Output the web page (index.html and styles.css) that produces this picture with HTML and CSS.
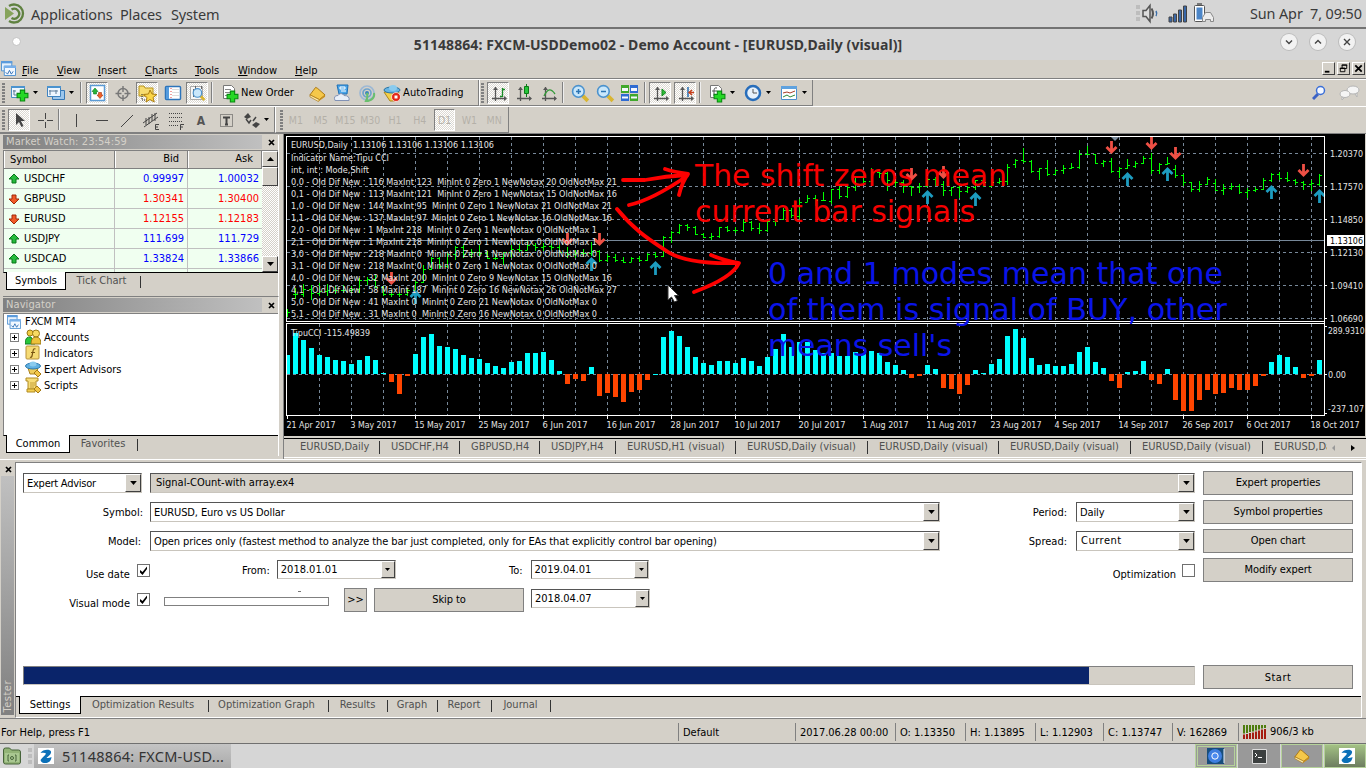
FILE: index.html
```html
<!DOCTYPE html>
<html lang="en">
<head>
<meta charset="utf-8">
<title>51148864: FXCM-USDDemo02</title>
<link rel="stylesheet" href="styles.css">
</head>
<body>
<svg class="defs" width="0" height="0">
  <defs>
    <symbol id="caret" viewBox="0 0 5 3"><path d="M0 0h5L2.5 3z"/></symbol>
    <symbol id="plus" viewBox="0 0 12 12"><path d="M4 1h4v3h3v4H8v3H4V8H1V4h3z" fill="#25d825" stroke="#0a8a12"/></symbol>
    <symbol id="win" viewBox="0 0 16 16"><path d="M.5 .5h11v10H.5z" fill="#e6f1fc" stroke="#4b8fd0"/><path d="M0 0h12v2.500H0z" fill="#5b9bdc"/><path d="M3.500 5.500h12v10h-12z" fill="#f2f8ff" stroke="#4b8fd0"/><path d="M3 5h13v2.500H3z" fill="#78b0ea"/><path d="M5 12l2 2 2-4 2 4 2-3" fill="none" stroke="#2f6fb5"/></symbol>
    <symbol id="gold" viewBox="0 0 18 16"><path d="M1 9L7 1l2 1 8 7-6 5z" fill="#f5c84a" stroke="#a87410"/><path d="M1 9v2l9 5 1-2z" fill="#fff0b0" stroke="#a87410" stroke-width=".7"/><path d="M11 14l-1 2 7-5V9z" fill="#c98e18"/></symbol>
    <symbol id="axes" viewBox="0 0 16 16"><path d="M3.500 1v14M0 12.500h14" stroke="#555" stroke-width="1.300"/><path d="M1 4l2.500-3L6 4zM12 10l3 2.500-3 2.500z" fill="#555"/></symbol>
    <symbol id="lens" viewBox="0 0 18 18"><path d="M11 11l5 5" stroke="#d9b531" stroke-width="3.500"/><circle cx="7" cy="7" r="5.500" fill="#c9e7fb" stroke="#4b92cd" stroke-width="1.500"/></symbol>
    <symbol id="up" viewBox="0 0 12 12"><path d="M6 1l5 5H8v4H4V6H1z" fill="#25bb3c" stroke="#087518"/></symbol>
    <symbol id="dn" viewBox="0 0 12 12"><path d="M6 11l5-5H8V2H4v4H1z" fill="#f05a28" stroke="#a02808"/></symbol>
    <symbol id="z" viewBox="0 0 16 16"><path d="M0 0h16v16H0z" fill="#fff"/><path d="M2.500 5C4 1.500 12 .5 13 3.500c.6 2.500-2.500 4.500-4.500 6.500 2 0 3.500-.3 5-1-.3 4.500-3.500 6-6 6S3 14.500 2.500 12C4 9.500 7.500 7.500 8 5.500 7 4.500 5 4.500 2.500 5z" fill="#0a70b8"/></symbol>
    <symbol id="tick" viewBox="0 0 9 9"><path d="M1 4v2.500L3.500 9 8 3V.5L3.500 6z"/></symbol>
    <symbol id="cross" viewBox="0 0 7 7"><path d="M1 1l5 5M6 1L1 6" stroke="#000" stroke-width="1.700" fill="none"/></symbol>
  </defs>
</svg>
<div class="screen">
  <header class="panel">
    <svg class="mate" width="22" height="22" viewBox="0 0 22 22"><path d="M1 4v13l9-6.500z" fill="#86a35b"/><g fill="none" stroke="#5f8140" stroke-width="2.300"><path d="M5 3a9 9 0 1 1 0 15"/><path d="M7.500 6.500a5 5 0 1 1 0 8.500"/></g></svg>
    <span class="apps">Applications</span><span class="places">Places</span><span class="system">System</span>
    <svg class="tray" width="80" height="22" viewBox="1136 3 80 22"><path d="M1136 5h4v4h-4zM1136 11h4v4h-4zM1136 17h4v4h-4z" fill="#bdbdbd"/><path d="M1143 10.500h3l4-5v16l-4-5h-3z" fill="#ddd" stroke="#555" stroke-width="1.500"/><path d="M1151.500 8.500q3 5 0 10" fill="none" stroke="#555" stroke-width="2"/><path d="M1156 11q1.500 2.500 0 5" fill="none" stroke="#3a6ea8" stroke-width="1.500"/><path d="M1169 17h3v5h-3zM1173.500 14h3v8h-3zM1178.500 10h3v12h-3zM1183.500 6h3v16h-3z" fill="#3867a8" stroke="#444"/><rect x="1194.500" y="5.500" width="10" height="16" rx="1" fill="#fff" stroke="#555"/><path d="M1196.500 7.500h6v12h-6z" fill="#4c86c8"/><path d="M1197 3h5v2h-5z" fill="#777"/><path d="M1202.500 21.500v-4l3-5h5l3 5v4h-3v-2h-5v2z" fill="#ececec" stroke="#888"/></svg>
    <span class="date">Sun Apr&nbsp; 7, 09:50</span>
  </header>
  <div class="titlebar"><i class="dot"></i><b>51148864: FXCM-USDDemo02 - Demo Account - [EURUSD,Daily (visual)]</b>
    <div class="winbtns"><i><svg viewBox="0 0 16 16"><path d="M5 6.500l3 3 3-3"/></svg></i><i><svg viewBox="0 0 16 16"><path d="M5 9.500l3-3 3 3"/></svg></i><i><svg viewBox="0 0 16 16"><path d="M5 5l6 6M11 5l-6 6"/></svg></i></div>
  </div>
  <nav class="menu"><svg width="15" height="15"><use href="#win"/></svg>
    <span style="width:35px"><u>F</u>ile</span><span style="width:41px"><u>V</u>iew</span><span style="width:47px"><u>I</u>nsert</span><span style="width:50px"><u>C</u>harts</span><span style="width:43px"><u>T</u>ools</span><span style="width:57px"><u>W</u>indow</span><span><u>H</u>elp</span>
    <div class="mdi"><i><svg viewBox="0 0 12 12"><path d="M2 9.500h5" stroke-width="2"/></svg></i><i><svg viewBox="0 0 12 12"><path d="M4.500 2h5v4h-5zM4 2.500h6M2.500 5.500h5v4h-5zM2 6h6"/></svg></i><i><svg viewBox="0 0 12 12"><path d="M2.500 2.500l7 7M9.500 2.500l-7 7" stroke-width="2"/></svg></i></div>
  </nav>

  <div class="bar bar1">
    <div class="group">
      <i class="grip"></i>
      <i class="b tight"><svg viewBox="0 0 22 22"><path d="M2.500 4.500h13v11h-13z" fill="#eef6ff" stroke="#4b8fc5"/><path d="M2 4h14v2H2z" fill="#4b93cf"/><path d="M5 8v5h7M4 9h3M10 12v3" stroke="#5e7d9a" fill="none"/><use href="#plus" x="7" y="7" width="13" height="13"/></svg></i><i class="c"><svg><use href="#caret"/></svg></i>
      <i class="b tight s6"><svg viewBox="0 0 22 22"><path d="M7.500 8.500h12v9h-12z" fill="#9cc6ec" stroke="#3778b5"/><path d="M2.500 4.500h13v10h-13z" fill="#eef6ff" stroke="#3f83c0"/><path d="M2 4h14v2H2z" fill="#4b93cf"/><path d="M5 8v5M4 9h9M11 8v4" stroke="#5e7d9a"/></svg></i><i class="c"><svg><use href="#caret"/></svg></i>
      <i class="sep lead"></i>
      <i class="b on"><svg viewBox="0 0 22 22"><path d="M4.500 3.500h14v15h-14z" fill="#fff" stroke="#5b9bd5" stroke-width="1.500"/><path d="M9 6l3 3.500h-1.500V12h-3V9.500H6z" fill="#27b53a" stroke="#0a7a1b" stroke-width=".6"/><path d="M14 16.500l3-3.500h-1.500v-2.500h-3V13H11z" fill="#f26026" stroke="#a03010" stroke-width=".6"/></svg></i>
      <i class="b"><svg viewBox="0 0 22 22"><g fill="none" stroke="#777" stroke-width="1.400"><circle cx="12" cy="11.500" r="5"/><path d="M12 4v6M12 13v6M4.500 11.500h6M13.500 11.500h6"/></g></svg></i>
      <i class="b on"><svg viewBox="0 0 22 22"><path d="M3 4h5l1 2h8v8H3z" fill="#f7dc70" stroke="#b8941d"/><path d="M6 12v6h4" stroke="#222" fill="none" stroke-dasharray="1 1"/><path d="M14 8l2 4 5 .5-4 3 1.200 4.500-4.200-2.500L10 20l1-4.500-3.500-3 5-.5z" fill="#fbd648" stroke="#ad7e10"/></svg></i>
      <i class="b"><svg viewBox="0 0 22 22"><rect x="4.500" y="4.500" width="15" height="13" rx="1" fill="#fff" stroke="#2d74ba" stroke-width="1.500"/><path d="M5 5h3v12H5z" fill="#549bdd"/><path d="M11 7.500h7M11 10.500h7M11 13.500h7" stroke="#ddd"/><path d="M10 6v11" stroke="#e24040" stroke-dasharray="1 2"/></svg></i>
      <i class="b on"><svg viewBox="0 0 22 22"><path d="M4.500 4.500h12v13h-12z" fill="#f7f7f7" stroke="#aaa"/><path d="M7.500 15V7M9.500 8V4M15.500 4v3" stroke="#666"/><use href="#lens" x="6" y="5" width="14" height="15"/></svg></i>
      <i class="sep tail"></i>
      <i class="b tight"><svg viewBox="0 0 22 22"><path d="M4.500 3.500h8l3 3v10h-11z" fill="#fff" stroke="#777"/><path d="M6 7.500h6M6 10.500h7M6 13.500h5" stroke="#888"/><use href="#plus" x="7" y="8" width="13" height="13"/></svg></i><span class="t1">New Order</span>
      <i class="b"><svg viewBox="0 0 22 22"><use href="#gold" x="3" y="4" width="17" height="16"/></svg></i>
      <i class="b"><svg viewBox="0 0 22 22"><path d="M6 3h11l-1 9H8z" fill="#4aa6ea" stroke="#1d6fb5"/><path d="M9 5h5v2H9zM10 9h5" stroke="#fff" fill="none"/><path d="M4 18.500q-2-5 3-5 3-4 6 0 6 0 5 5z" fill="#e9eff8" stroke="#8292b5"/></svg></i>
      <i class="b"><svg viewBox="0 0 22 22"><g fill="none" stroke-width="1.700"><circle cx="11" cy="11" r="7" stroke="#9db8d4"/><circle cx="11" cy="11" r="4" stroke="#6fa3cc"/></g><circle cx="11" cy="11" r="2" fill="#3a86bd"/><path d="M11 11c1 3 0 6-1 8 6 0 9-4 8-8" fill="none" stroke="#6abf6e" stroke-width="2"/></svg></i>
      <i class="b tight"><svg viewBox="0 0 22 22"><path d="M3 10h15l-4 9H9z" fill="#f4cf49" stroke="#ad8518"/><ellipse cx="11" cy="8" rx="8" ry="3" fill="#67b5e4" stroke="#2773a5"/><ellipse cx="12" cy="6" rx="4" ry="3" fill="#8acbee"/><circle cx="15" cy="15" r="4.500" fill="#e22818" stroke="#fff" stroke-width=".7"/><path d="M13.500 13.500h3v3h-3z" fill="#fff"/></svg></i><span class="t2">AutoTrading</span>
    </div>
    <div class="group g2">
      <i class="grip"></i>
      <i class="b on"><svg viewBox="0 0 22 22"><use href="#axes" x="5" y="4" width="16" height="16"/><path d="M15.500 6v9M13 14.500h2M16 7.500h2" stroke="#198a26" stroke-width="1.300"/></svg></i>
      <i class="b"><svg viewBox="0 0 22 22"><use href="#axes" x="5" y="4" width="16" height="16"/><path d="M14.500 2v13" stroke="#0d7a18"/><path d="M12.500 4.500h4v7h-4z" fill="#26c53a" stroke="#0d7a18"/></svg></i>
      <i class="b tight"><svg viewBox="0 0 22 22"><use href="#axes" x="5" y="4" width="16" height="16"/><path d="M7 14c3-6 6-9 11-2" stroke="#339a39" fill="none" stroke-width="1.300"/></svg></i>
      <i class="sep tail first"></i>
      <i class="b"><svg viewBox="0 0 22 22"><use href="#lens" x="2" y="2" width="19" height="19"/><path d="M7 9.500h5M9.500 7v5" stroke="#2b74b3" stroke-width="1.500"/></svg></i>
      <i class="b"><svg viewBox="0 0 22 22"><use href="#lens" x="2" y="2" width="19" height="19"/><path d="M7 9.500h5" stroke="#2b74b3" stroke-width="1.500"/></svg></i>
      <i class="b"><svg viewBox="0 0 22 22"><path d="M2 3h8v8H2zM11 12h8v7h-8z" fill="#40a82c"/><path d="M11 3h8v8h-8zM2 12h8v7H2z" fill="#2f6bd2"/><path d="M3 6h6v3H3zM12 6h6v3h-6zM3 14.500h6v2H3zM12 14.500h6v2h-6z" fill="#f6f8ff"/></svg></i>
      <i class="sep tail"></i>
      <i class="b on"><svg viewBox="0 0 22 22"><use href="#axes" x="5" y="4" width="16" height="16"/><path d="M13 7v7l4-3.500z" fill="#2cbd36" stroke="#14851c"/></svg></i>
      <i class="b on"><svg viewBox="0 0 22 22"><use href="#axes" x="5" y="4" width="16" height="16"/><path d="M14 5v10" stroke="#246cb0" stroke-width="1.500"/><path d="M15 10.500h5M18 8l-3 2.500 3 2.500" stroke="#c8401c" fill="none" stroke-width="1.400"/></svg></i>
      <i class="sep tail last"></i>
      <i class="b tight"><svg viewBox="0 0 22 22"><path d="M4.500 3.500h8l3 3v9h-11z" fill="#fff" stroke="#777"/><path d="M11 6q-3-1-3 3v5M6 9h5" stroke="#555" fill="none"/><use href="#plus" x="7" y="8" width="13" height="13"/></svg></i><i class="c"><svg><use href="#caret"/></svg></i>
      <i class="b tight s6"><svg viewBox="0 0 22 22"><circle cx="11" cy="11" r="7" fill="#e7f1fb" stroke="#276dbb" stroke-width="2.500"/><path d="M11 7v4h4" stroke="#555" fill="none"/></svg></i><i class="c"><svg><use href="#caret"/></svg></i>
      <i class="b tight s6"><svg viewBox="0 0 22 22"><path d="M3.500 4.500h15v13h-15z" fill="#fff" stroke="#4a8fcd"/><path d="M3 4h16v3H3z" fill="#5fa2df"/><path d="M5 11l4-1 3 1 5-2" stroke="#a93c28" fill="none"/><path d="M5 15l4-2 3 2 5-2" stroke="#2d8a39" fill="none"/></svg></i><i class="c"><svg><use href="#caret"/></svg></i>
    </div>
    <svg class="right-icons" width="50" height="18" viewBox="1312 84 50 18"><path d="M1318 94l-5 5" stroke="#3c62c4" stroke-width="3"/><circle cx="1320.500" cy="90.500" r="4" fill="#f3f7ff" stroke="#3b6fd6" stroke-width="1.500"/><g fill="#f5f5f5" stroke="#b5b5b5"><path d="M1355 94l2 3v-4z"/><ellipse cx="1353" cy="90" rx="6" ry="4"/><path d="M1342 97v3l3-3z"/><ellipse cx="1345" cy="94" rx="5" ry="3.500"/></g></svg>
  </div>

  <div class="bar bar2">
    <div class="group tools">
      <i class="grip"></i>
      <i class="b on"><svg viewBox="0 0 22 22"><path d="M8 4v12l3-3 2.500 5 2-1-2.500-5h4z" fill="#444"/></svg></i>
      <i class="b"><svg viewBox="0 0 22 22"><path d="M12.500 4v6M12.500 13v6M5 11.500h6M14 11.500h6" stroke="#444"/></svg></i>
      <i class="sep mid"></i>
      <i class="b"><svg viewBox="0 0 22 22"><path d="M11.500 5v13" stroke="#444"/></svg></i>
      <i class="b"><svg viewBox="0 0 22 22"><path d="M6 11.500h12" stroke="#444"/></svg></i>
      <i class="b"><svg viewBox="0 0 22 22"><path d="M6 18L18 6" stroke="#444"/></svg></i>
      <i class="b"><svg viewBox="0 0 22 22"><path d="M3 14L17 4M4 18L18 8M6 9v7M9 8v7M12 5v7M15 4v8" stroke="#444"/><path d="M19 15.500h-3.500v5H19M15 18h3" stroke="#444" fill="none"/></svg></i>
      <i class="b"><svg viewBox="0 0 22 22"><path d="M4 4.500h14M4 8.500h14M4 12.500h14M4 16.500h9" stroke="#444" stroke-dasharray="1 1"/><path d="M19 15.500h-3.500V21M15 18h3" stroke="#444" fill="none"/></svg></i>
      <i class="b glyph">A</i>
      <i class="b"><svg viewBox="0 0 22 22"><path d="M5.500 5.500h12v12h-12z" stroke="#444" fill="none" stroke-dasharray="1 1"/><path d="M8 8.500h7M11.500 8v8M10 15.500h3" stroke="#444" stroke-width="2"/></svg></i>
      <i class="b tight"><svg viewBox="0 0 22 22"><path d="M4 8l4-4 3 4-4 2zM12 16l4-3 4 2-4 4z" fill="#444"/><path d="M6 10l3 4 2-3M13 12l3-4" stroke="#444" stroke-width="1.500" fill="none"/></svg></i><i class="c"><svg><use href="#caret"/></svg></i>
    </div>
    <div class="group periods"><i class="grip"></i><span>M1</span><span>M5</span><span>M15</span><span>M30</span><span>H1</span><span>H4</span><span class="on">D1</span><span>W1</span><span>MN</span></div>
  </div>

  <main>
    <aside>
      <section class="dock watch">
        <h2><span>Market Watch: 23:54:59</span><i class="x"><svg><use href="#cross"/></svg></i></h2>
        <div class="quotes">
          <div class="rows">
            <div class="r head"><span>Symbol</span><span>Bid</span><span>Ask</span></div>
            <div class="r buy"><span><svg><use href="#up"/></svg>USDCHF</span><span>0.99997</span><span>1.00032</span></div>
            <div class="r sell"><span><svg><use href="#dn"/></svg>GBPUSD</span><span>1.30341</span><span>1.30400</span></div>
            <div class="r sell"><span><svg><use href="#dn"/></svg>EURUSD</span><span>1.12155</span><span>1.12183</span></div>
            <div class="r buy"><span><svg><use href="#up"/></svg>USDJPY</span><span>111.699</span><span>111.729</span></div>
            <div class="r buy"><span><svg><use href="#up"/></svg>USDCAD</span><span>1.33824</span><span>1.33866</span></div>
            <div class="r buy last"><span></span><span></span><span></span></div>
          </div>
          <div class="scroll"><i class="sb"><svg viewBox="0 0 7 4"><path d="M0 4h7L3.500 0z"/></svg></i><i class="thumb"></i><i class="sb end"><svg viewBox="0 0 7 4"><path d="M0 0h7L3.500 4z"/></svg></i></div>
        </div>
        <div class="tabs"><span class="sel" style="width:60px">Symbols</span><span class="off" style="width:74px">Tick Chart</span></div>
      </section>
      <section class="dock nav">
        <h2><span>Navigator</span><i class="x"><svg><use href="#cross"/></svg></i></h2>
        <div class="tree">
          <div><svg class="root" width="14" height="14"><use href="#win"/></svg>FXCM MT4</div>
          <div class="n"><i></i><svg viewBox="0 0 16 16"><circle cx="5" cy="4" r="3" fill="#f1cc42" stroke="#9a7914"/><path d="M0 15q0-8 6-7l4 7z" fill="#28c63c" stroke="#117c1f"/><circle cx="11" cy="4.500" r="3.500" fill="#f7da63" stroke="#9a7914"/><path d="M6 15q0-7 5-7t5 7z" fill="#edc23b" stroke="#9a7914"/></svg>Accounts</div>
          <div class="n"><i></i><svg viewBox="0 0 16 16"><rect x="1" y="1" width="13" height="13" rx="1" fill="#f6db75" stroke="#b8923a"/><path d="M10.500 4q-2-1-2.500 2l-1 5q-.5 2-2 1M6 7.500h4" stroke="#785412" fill="none" stroke-width="1.200"/></svg>Indicators</div>
          <div class="n"><i></i><svg viewBox="0 0 16 16"><path d="M3 7h10l-2 6H5z" fill="#f0cd5a" stroke="#a98220"/><ellipse cx="8" cy="5" rx="7.500" ry="3" fill="#5fb0e2" stroke="#2b78ad"/><ellipse cx="8" cy="3" rx="3.500" ry="2.500" fill="#8acbee"/><path d="M9 12l3-3 4 4-3 3z" fill="#f2c646" stroke="#a67a15"/></svg>Expert Advisors</div>
          <div class="n lastn"><i></i><svg viewBox="0 0 16 16"><path d="M1 1h12v3h-2v8H3V4H1z" fill="#f7dc76" stroke="#b08b23"/><path d="M5 6h5M5 8h5M5 10h4" stroke="#a67a15" stroke-width=".6"/><path d="M2 12h8v3H2z" fill="#f5d052" stroke="#b08b23"/><path d="M9 12l3-3 4 4-3 3z" fill="#f2c646" stroke="#a67a15"/></svg>Scripts</div>
        </div>
        <div class="tabs"><span class="sel" style="width:64px">Common</span><span class="off" style="width:67px">Favorites</span></div>
      </section>
    </aside>
    <section class="chartarea">
      <svg id="chart" class="chart" width="1081" height="302" viewBox="284 134 1081 302"></svg>
      <div class="charttabs"><span style="width:88px">EURUSD,Daily</span><span style="width:80px">USDCHF,H4</span><span style="width:80px">GBPUSD,H4</span><span style="width:76px">USDJPY,H4</span><span style="width:120px">EURUSD,H1 (visual)</span><span style="width:132px">EURUSD,Daily (visual)</span><span style="width:131px">EURUSD,Daily (visual)</span><span style="width:132px">EURUSD,Daily (visual)</span><span style="width:132px">EURUSD,Daily (visual)</span><span class="cut">EURUSD,Daily</span><svg width="30" height="8" viewBox="0 0 30 8"><path d="M4 1v6L1 4z" fill="#999"/><path d="M20 1v6l4-3z"/></svg></div>
    </section>
  </main>

  <section class="tester">
    <div class="rail"><i class="x"><svg><use href="#cross"/></svg></i><div><span>Tester</span></div></div>
    <div class="tpane">
      <div class="form">
        <div class="settings">
          <div class="row"><div class="field combo w119 kind">Expert Advisor<i><svg><use href="#caret"/></svg></i></div><div class="field combo grey wide">Signal-COunt-with array.ex4<i><svg><use href="#caret"/></svg></i></div></div>
          <div class="row"><label style="width:127px">Symbol:</label><div class="field combo w790">EURUSD, Euro vs US Dollar<i><svg><use href="#caret"/></svg></i></div><label class="far">Period:</label><div class="field combo w119">Daily<i><svg><use href="#caret"/></svg></i></div></div>
          <div class="row"><label style="width:125px">Model:</label><div class="field combo w790 after2">Open prices only (fastest method to analyze the bar just completed, only for EAs that explicitly control bar opening)<i><svg><use href="#caret"/></svg></i></div><label class="far">Spread:</label><div class="field combo w119 cur">Current<i><svg><use href="#caret"/></svg></i></div></div>
          <div class="row"><label class="low" style="width:107px">Use date</label><i class="check"><svg><use href="#tick"/></svg></i><label style="width:127px">From:</label><div class="field combo w119 dt">2018.01.01<i><svg><use href="#caret"/></svg></i></div><label class="to">To:</label><div class="field combo w119 dt">2019.04.01<i><svg><use href="#caret"/></svg></i></div><label class="low opt" style="width:527px">Optimization</label><i class="check"></i></div>
          <div class="row"><label class="low" style="width:107px">Visual mode</label><i class="check"><svg><use href="#tick"/></svg></i><div class="slider"><i></i></div><div class="btn skip1">&gt;&gt;</div><div class="btn skip2">Skip to</div><div class="field combo w119 dt">2018.04.07<i><svg><use href="#caret"/></svg></i></div></div>
          <div class="progress"><i style="width:1065px"></i></div>
        </div>
        <div class="buttons"><div class="btn">Expert properties</div><div class="btn">Symbol properties</div><div class="btn">Open chart</div><div class="btn">Modify expert</div><div class="btn start">Start</div></div>
      </div>
      <div class="tabs"><span class="sel" style="width:62px">Settings</span><span class="off pr" style="width:127px">Optimization Results</span><span class="off pr" style="width:120px">Optimization Graph</span><span class="off" style="width:59px">Results</span><span class="off" style="width:50px">Graph</span><span class="off" style="width:54px">Report</span><span class="off" style="width:59px">Journal</span></div>
    </div>
  </section>

  <footer class="status"><span style="width:678px">For Help, press F1</span><span style="width:117px">Default</span><span style="width:100px">2017.06.28 00:00</span><span style="width:70px">O: 1.13350</span><span style="width:70px">H: 1.13895</span><span style="width:68px">L: 1.12903</span><span style="width:69px">C: 1.13747</span><span style="width:66px">V: 162869</span><span class="net"><svg width="24" height="14" viewBox="0 0 24 14"><path d="M1 0v8.500M4 0v8M7 0v7M10 0v6.500M13 0v5.500M16 0v4.500M19 0v3.500M22 0v3" stroke="#4e7d0e" stroke-width="2"/><path d="M1 9.500V14M4 9V14M7 8v6M10 7.500V14M13 6.500V14M16 5.500V14M19 4.500V14M22 4v10" stroke="#a51c10" stroke-width="2"/></svg>906/3 kb</span></footer>
  <div class="taskbar">
    <svg class="desk" width="20" height="18" viewBox="0 0 20 18"><path d="M1.500 3q0-2 2-2h4l2 2h7q2 0 2 2v10q0 2-2 2h-13q-2 0-2-2z" fill="#92b377" stroke="#46633a"/><path d="M3 6h14v9H3z" fill="#a9c791"/><path d="M7 8H6v6h1M13 8h1v6h-1" fill="none" stroke="#46633a"/><circle cx="10" cy="11" r="1.500" fill="none" stroke="#46633a"/></svg>
    <i class="handle"></i>
    <div class="task"><svg width="16" height="16"><use href="#z"/></svg><span>51148864: FXCM-USD...</span></div>
    <div class="spaces"><i class="sp in"><svg width="18" height="18" viewBox="0 0 18 18"><path d="M0 1h17v16H0z" fill="#184d7b"/><circle cx="8" cy="9" r="7" fill="#3f7fe0"/><circle cx="8" cy="9" r="3.200" fill="#4d8cf0" stroke="#fff"/><path d="M17 2v14" stroke="#e5eef9"/></svg></i><i class="sp mid"><svg width="15" height="15" viewBox="0 0 15 15"><path d="M.5 .5h14v14H.5z" fill="#3c4040" stroke="#ddd"/><path d="M3 4l2 2-2 2M6 8.500h4" fill="none" stroke="#fff"/></svg></i><i class="sp out"><svg width="16" height="16"><use href="#gold"/></svg></i><i class="sp cur"><svg width="16" height="16"><use href="#z"/></svg></i></div>
  </div>
</div>
<script src="chart.js"></script>
</body>
</html>
```
FILE: styles.css
```css
* { box-sizing: border-box; }
body { margin: 0; background: #d4d0c8; font: 11px "DejaVu Sans Condensed", "DejaVu Sans", sans-serif; font-stretch: condensed; color: #000; overflow: hidden; }
i { font-style: normal; display: block; flex: none; }
svg { display: block; flex: none; }
.defs { position: absolute; }
.screen { width: 1366px; height: 768px; display: flex; flex-direction: column; white-space: nowrap; }

.panel { height: 29px; background: #d6d6d6; border-bottom: 2px solid #737373; display: flex; align-items: center; padding: 0 5px 0 4px; font: 14.500px "Noto Sans", sans-serif; letter-spacing: -.15px; color: #3a3a3a; }
.panel .apps { width: 89px; margin-left: 5px; }
.panel .places { width: 51px; }
.panel .system { flex: 1; }
.panel .date { width: 111px; margin-left: 34px; font-size: 14.400px; text-align: right; letter-spacing: -.1px; }
.titlebar { height: 31px; background: #d6d6d6; display: flex; align-items: center; padding: 0 11px 0 12px; font: 14px "Noto Sans", sans-serif; color: #3a3a3a; }
.titlebar b { margin-left: 389px; font-size: 14px; width: 496px; text-align: center; letter-spacing: .07px; }
.dot { width: 9px; height: 9px; border-radius: 50%; background: #fff; border: 1px solid #c2c2c2; margin-bottom: 6px; }
.winbtns { display: flex; gap: 13px; margin: 0 0 6px auto; }
.winbtns i { width: 16px; height: 16px; border-radius: 50%; background: #f2f2f2; box-shadow: 0 0 0 1px #bcbcbc; }
.winbtns path { fill: none; stroke: #444; stroke-width: 1.400; }
.menu { height: 19px; background: #d4d0c8; display: flex; align-items: center; border-bottom: 1px solid #808080; padding-left: 1px; }
.menu > svg { margin-top: -2px; }
.menu > svg + span { margin-left: 6px; }
.menu span { line-height: 18px; padding-top: 3px; }
.mdi { display: flex; margin: -2px 1px 0 auto; gap: 2px; }
.mdi i { width: 13px; height: 13px; border: 1px solid; border-color: #fff #404040 #404040 #fff; }
.mdi path { stroke: #000; fill: none; }

.bar { height: 27px; display: flex; align-items: stretch; border-top: 1px solid #fff; }
.group { display: flex; align-items: center; border-right: 1px solid #808080; border-bottom: 1px solid #808080; }
.group.g2 { border-left: 1px solid #fff; width: 334px; padding-left: 0; }
.bar1 .group:first-child { width: 479px; }
.grip { width: 3px; height: 20px; margin: 0 5px 0 2px; background: repeating-linear-gradient(#808080 0 2px, #d4d0c8 2px 3px); }
.bar1 .group:first-child .grip { margin-right: 4px; }
.g2 .grip { margin: 0 3px 0 1px; }
.b { width: 22px; height: 22px; margin-right: 3px; }
.b svg { width: 22px; height: 22px; }
.tight { margin-right: 0; }
.s6 { margin-left: 6px; }
.on { border: 1px solid; border-color: #808080 #fff #fff #808080; background: repeating-conic-gradient(#fff 0 25%, #dcd9d2 0 50%) 0 0 / 2px 2px; }
.on svg { margin: -1px; }
.c { width: 8px; }
.c svg { width: 5px; height: 3px; margin: 0 auto; }
.sep { width: 2px; height: 21px; border-left: 1px solid #808080; border-right: 1px solid #eee; }
.sep.lead { margin: 0 4px 0 5px; }
.sep.tail { margin: 0 4px 0 1px; }
.g2 .sep.tail { margin: 0 3px 0 0; }
.g2 .sep.first { margin: 0 5px 0 3px; }
.g2 .sep.last { margin: 0 5px 0 0; }
.sep.mid { margin: 0 5px 0 0; }
.bar1 .group:first-child .sep.tail { margin: 0 6px 0 0; }
.t1 { width: 65px; }
.t2 { width: 74px; letter-spacing: .15px; }
.right-icons { margin: 4px 4px 0 auto; }
.tools { width: 275px; }
.tools .grip { margin-right: 3px; }
.glyph { text-align: center; font: 700 12px/24px "DejaVu Sans Condensed", sans-serif; color: #555; }
.periods { width: 234px; border-left: 1px solid #fff; color: #b4b0a8; font-size: 10.500px; }
.periods .grip { margin: 0 2px 0 4px; }
.periods span { width: 22px; height: 22px; line-height: 23px; margin-right: 3px; text-align: center; }
.periods span.on { line-height: 21px; }

main { height: 326px; display: flex; border-top: 1px solid #808080; }
aside { width: 284px; border-right: 1px solid #808080; padding: 1px 4px 0 3px; }
.dock h2 { margin: 0; height: 15px; display: flex; font: 11px/14px "DejaVu Sans Condensed", sans-serif; letter-spacing: .1px; color: #d4d0c8; }
.dock h2 span { width: 262px; padding-left: 3px; background: linear-gradient(90deg, #808080, #c0c0c0); height: 14px; line-height: 13px; }
.x { width: 16px; display: flex; align-items: center; justify-content: center; }
.dock .x { height: 14px; padding: 1px 0 0 2px; }
.x svg { width: 7px; height: 7px; }
.watch { height: 162px; border-bottom: 1px solid #808080; }
.dock { border-right: 1px solid #fff; }
.quotes { height: 123px; display: flex; border-top: 1px solid #808080; border-left: 1px solid #808080; border-bottom: 1px solid #000; background: #f0fff0; overflow: hidden; }
.rows { width: 258px; }
.r { display: flex; height: 20px; line-height: 20px; border-bottom: 1px solid #c0c0c0; }
.r span { width: 73px; text-align: right; padding-right: 3px; border-right: 1px solid #c0c0c0; }
.r span:first-child { width: 111px; display: flex; text-align: left; color: #000; align-items: center; }
.r span:last-child { width: 74px; border: 0; }
.r svg { width: 12px; height: 12px; margin: 0 4px 0 4px; }
.head { height: 18px; line-height: 15px; background: #d4d0c8; border-bottom: 1px solid #808080; }
.head span, .head span:last-child { border-right: 1px solid #808080; padding: 0 8px; border-left: 1px solid #fff; }
.head span:first-child { padding-left: 5px; }
.buy { color: #00f; }
.sell { color: #f00; }
.scroll { width: 17px; display: flex; flex-direction: column; background: repeating-conic-gradient(#fff 0 25%, #d4d0c8 0 50%) 0 0 / 2px 2px; }
.scroll i { background: #d4d0c8; border: 1px solid; border-color: #fff #404040 #404040 #fff; }
.sb { height: 16px; display: flex; align-items: center; justify-content: center; }
.sb svg { width: 7px; height: 4px; }
.thumb { height: 19px; }
.sb.end { margin-top: auto; }
.tabs { display: flex; height: 19px; margin-top: -1px; color: #505050; padding-left: 3px; }
.tabs span { height: 18px; line-height: 18px; text-align: center; }
.tabs .sel { background: #fff; color: #000; border: 1px solid #000; border-top: 0; margin-right: 1px; }
.tabs .off { position: relative; padding-right: 2px; }
.tabs .off.pr { padding-right: 5px; }
.tabs .off::after { content: ""; position: absolute; right: 0; top: 4px; height: 12px; border-right: 1px solid #333; }
.watch .tabs .off { padding-right: 5px; }
.nav { height: 159px; padding-top: 1px; }
.nav .tabs .off { padding-right: 3px; }
.tree { height: 123px; background: #fff; border-top: 1px solid #808080; border-left: 1px solid #808080; border-bottom: 1px solid #000; padding: 0 0 0 3px; }
.tree div { display: flex; align-items: center; height: 16px; }
.tree div:first-child { height: 15px; }
.root { margin-right: 4px; }
.n i { width: 9px; height: 9px; border: 1px solid #808080; margin: 0 6px 0 3px; background: linear-gradient(#000, #000) 1px 3px / 5px 1px no-repeat, linear-gradient(#000, #000) 3px 1px / 1px 5px no-repeat; }
.n svg { width: 16px; height: 16px; margin-right: 3px; }

.chartarea { width: 1082px; display: flex; flex-direction: column; }
.chart { background: #000; }
.charttabs { height: 20px; margin-top: 2px; border-top: 1px solid #000; border-bottom: 1px solid #fff; display: flex; align-items: center; color: #505050; padding: 0 0 1px 8px; }
.charttabs span { height: 13px; line-height: 12px; border-right: 1px solid #333; padding-left: 8px; letter-spacing: -.03px; }
.charttabs span + span { padding-left: 11px; }
.charttabs .cut { width: 64px; overflow: hidden; border: 0; }
.charttabs svg { margin-left: 4px; }

.tester { height: 260px; display: flex; border-top: 1px solid #fff; border-bottom: 1px solid #808080; padding-top: 2px; }
.rail { width: 15px; padding-left: 1px; }
.rail .x { height: 14px; width: 14px; }
.rail div { width: 13px; height: 239px; background: linear-gradient(#c0c0c0, #808080); color: #d4d0c8; display: flex; align-items: flex-end; padding-bottom: 3px; }
.rail span { writing-mode: vertical-rl; transform: rotate(180deg); line-height: 13px; letter-spacing: .5px; }
.tpane { width: 1347px; border: 1px solid #808080; border-right-color: #fff; border-bottom-color: #fff; }
.form { height: 234px; background: #fff; border-bottom: 1px solid #000; display: flex; padding: 5px 0 0 7px; }
.settings { width: 1172px; }
.row { height: 29px; display: flex; align-items: center; }
.row label { text-align: right; padding-right: 7px; padding-top: 2px; }
.row label.low { padding: 10px 0 0; margin-right: 7px; }
.row label.opt { margin-right: 6px; }
.row label.far { width: 136px; padding-right: 9px; }
.row label.to { width: 135px; padding-right: 8px; }
.field { height: 20px; border: 1px solid; border-color: #555 #c9c5bd #c9c5bd #555; background: #fff; display: flex; line-height: 20px; padding-left: 3px; letter-spacing: -.11px; }
.kind { letter-spacing: -.25px; }
.w119 { width: 119px; }
.w790 { width: 790px; }
.after2 { margin-left: 2px; }
.wide { width: 1045px; margin-left: 8px; padding-left: 5px; letter-spacing: 0; }
.grey { background: #d4d0c8; line-height: 18px; }
.cur { letter-spacing: .5px; padding-left: 4px; line-height: 18px; }
.field i { margin-left: auto; width: 16px; background: #d4d0c8; border: 1px solid; border-color: #fff #404040 #404040 #fff; display: flex; align-items: center; justify-content: center; }
.field svg { width: 7px; height: 4px; }
.dt { height: 19px; line-height: 18px; margin-bottom: 1px; letter-spacing: 0; }
.field.dt i { width: 14px; }
.field.dt svg { width: 5px; height: 3px; }
.check { width: 13px; height: 13px; border: 1px solid #707070; background: #fff; margin-top: 2px; }
.check svg { width: 9px; height: 9px; margin: 1px; }
.btn { border: 1px solid #808080; background: #d4d0c8; text-align: center; height: 24px; line-height: 22px; letter-spacing: -.08px; }
.slider { width: 165px; height: 9px; border: 1px solid #808080; margin: 5px 15px 0 14px; position: relative; }
.slider i { position: absolute; left: 133px; top: -7px; width: 3px; height: 1px; background: #777; }
.skip1 { width: 23px; margin: 3px 7px 0 0; }
.skip2 { width: 150px; margin: 3px 7px 0 0; }
.progress { height: 19px; margin-top: 53px; border: 1px solid; border-color: #808080 #c9c5bd #c9c5bd #808080; background: #d4d0c8; }
.progress i { height: 17px; background: #0a246a; }
.buttons { margin-left: 8px; width: 150px; padding-top: 3px; display: flex; flex-direction: column; gap: 5px; }
.buttons .start { margin-top: 78px; letter-spacing: .5px; line-height: 24px; }

.status { height: 24px; display: flex; align-items: center; padding: 4px 0 2px 0; }
.status span { height: 18px; line-height: 20px; padding-left: 4px; border-left: 1px solid #808080; }
.status span:first-child { border: 0; padding-left: 1px; }
.status .net { display: flex; align-items: center; gap: 3px; }
.taskbar { height: 25px; border-top: 1px solid #707070; background: #d6d6d6; display: flex; align-items: center; }
.desk { margin: 0 6px 0 2px; }
.handle { width: 4px; height: 16px; background: repeating-linear-gradient(#bdbdbd 0 4px, transparent 4px 6px); margin-right: 2px; }
.task { width: 197px; height: 24px; background: linear-gradient(#c4c4c4, #aaa); display: flex; align-items: center; font: 14.500px "Noto Sans", sans-serif; color: #333; padding-left: 4px; gap: 8px; letter-spacing: .25px; }
.spaces { display: flex; margin-left: auto; gap: 1px; height: 24px; }
.sp { width: 42px; background: #999; border: 1px solid #b5d29a; display: flex; align-items: center; justify-content: center; }
.sp.in { box-shadow: inset 0 0 0 1px #999, inset 0 0 0 2px #b5d29a; }
.sp.mid { border-color: #999; }
.sp.cur { background: linear-gradient(#a3c184, #6d7d60); }
```
FILE: chart.js
```js
// Bar pitch is 8px; bar i is centred on X0 + 8 * i.
const X0 = 287.5;
const hist = [19,41,34,26,19,17,14,13,10,14,18,14,1,-8,-20,-2,20,37,40,28,27,25,19,16,15,11,8,6,12,13,21,21,22,14,3,-10,-5,-7,7,-22,-19,-23,-28,-18,-16,-6,-1,37,43,38,27,17,11,9,13,13,11,16,13,8,17,25,40,27,32,32,24,21,21,18,18,22,20,23,21,12,9,4,-4,-2,9,5,-14,-15,-20,-11,4,1,10,15,38,45,36,16,9,10,8,8,10,22,27,12,6,-7,-14,2,3,13,-6,-10,5,-26,-37,-37,-26,-16,-20,-19,-14,-16,-16,-12,-2,12,19,17,7,-4,-2,14];
// high low open close, in chart pixels
const ohlc = `309 317 312 312,288 299 294 294,284 297 294 289,285 300 289 293,283 296 293 291,284 296 291 290,286 294 290 290,285 293 290 290,286 293 290 289,278 293 289 280,277 285 280 279,275 288 279 287,286 296 287 294,290 297 294 294,292 297 294 294,288 296 294 290,281 290 290 282,265 283 282 269,257 270 269 258,257 269 258 266,252 268 266 254,246 260 254 247,245 258 247 254,249 258 254 252,245 257 252 253,251 259 253 258,254 260 258 258,252 265 258 252,245 258 252 249,244 252 249 250,241 250 250 245,243 251 245 247,243 251 247 246,243 250 246 247,245 253 247 252,247 258 252 254,250 258 254 253,249 257 253 253,242 256 253 251,250 262 251 260,254 262 260 256,254 262 257 260,257 263 260 262,257 262 262 258,256 262 258 260,253 261 260 254,252 258 254 256,236 257 256 237,231 243 237 232,224 234 232 225,224 231 225 227,226 235 227 234,233 238 234 237,233 240 237 236,227 238 236 227,226 232 227 230,227 233 230 230,220 232 230 222,221 231 222 228,223 234 228 230,221 232 230 221,217 226 221 221,208 220 219 210,208 218 210 215,199 219 216 202,195 202 202 198,195 206 198 200,192 201 200 200,189 204 201 189,186 199 189 196,186 198 196 187,176 191 187 177,175 184 177 181,168 182 181 172,172 178 172 173,172 191 173 180,180 187 182 182,180 193 182 186,186 196 186 187,183 193 187 186,178 186 186 179,177 186 179 184,181 196 184 190,187 196 190 187,186 198 187 191,186 193 191 187,180 190 187 180,178 187 180 182,177 187 186 182,178 184 182 181,164 185 181 167,159 168 164 160,148 163 160 161,160 173 161 171,168 180 171 168,160 176 168 174,169 175 174 170,165 174 170 168,163 169 168 167,150 169 167 154,146 155 154 154,154 164 154 163,160 167 163 161,158 173 161 171,167 178 171 168,159 169 168 165,161 168 166 163,156 164 163 158,153 174 158 170,163 174 170 164,157 165 164 163,165 178 169 175,174 186 175 182,182 192 182 189,181 192 189 184,177 185 184 179,179 191 183 190,184 195 190 188,183 190 188 186,184 194 186 192,188 198 192 190,187 192 190 189,178 190 189 180,173 182 180 174,172 180 174 178,172 182 178 180,179 185 180 182,181 190 182 184,180 191 184 183,174 186 184 175`.split(',').map(s => s.split(' ').map(Number));

let out = '';
const line = (d, c, extra = '') => { out += `<path d="${d}" stroke="${c}" fill="none" ${extra}/>`; };
const text = (x, y, s, w, attrs = '') => {
  out += `<text x="${x}" y="${y}" ${w ? `textLength="${w}" lengthAdjust="spacingAndGlyphs"` : ''} ${attrs}>${s}</text>`;
};

// grid
let g = '';
for (let x = 319.5; x < 1324; x += 32) g += `M${x} 137V321M${x} 324V415`;
for (let y = 153.5; y < 321; y += 33) g += `M287 ${y}H1324`;
line(g + 'M287 374.5H1324', '#778899', 'stroke-dasharray="3 3"');
line('M287 240.5H1324', '#778899');
out += '<path d="M1111 137h8l-4 4z" fill="#778899"/>';

// histogram
hist.forEach((v, i) => {
  const x = Math.max(287, X0 + 8 * i - 2.5), w = i ? 5 : 3;
  out += `<rect x="${x}" y="${v > 0 ? 374 - v : 374}" width="${w}" height="${Math.abs(v)}" fill="${v > 0 || v === -1 ? '#0ff' : '#ff4500'}"/>`;
});

// price bars
let p = '';
ohlc.forEach(([h, l, o, c], i) => {
  const x = X0 + 8 * i;
  p += `M${x} ${h}V${l}M${Math.max(287, x - 2.5)} ${o + .5}H${x}M${x} ${c + .5}h2.5`;
});
line(p, '#0f0');

// signal arrows
for (const [x, y] of [[391,278],[567,239],[599,239],[911,174],[943,172],[1111,147],[1151,143],[1175,153],[1303,170]])
  line(`M${x + .5} ${y - 6}v11M${x - 4.5} ${y}l5 5 5-5`, '#ef5045', 'stroke-width="2.800"');
for (const [x, y] of [[415,297],[591,264],[655,268],[927,197],[975,199],[1127,179],[1167,174],[1271,192],[1319,196]])
  line(`M${x + .5} ${y + 7}v-11M${x - 4.5} ${y}l5-5 5 5`, '#1d9cc0', 'stroke-width="2.800"');

// frames and axis ticks
line('M1324.500 136V416M286.500 136V322M286.500 323V416M286 136.500H1325M286 321.500H1325M286 323.500H1325M286 415.500H1325', '#fff');
let t = '';
for (let x = X0; x < 1324; x += 64) t += `M${x} 416v3`;
for (const y of [153.5, 186.5, 219.5, 252.5, 285.5, 318.5, 326.5, 374.5, 413.5]) t += `M1325 ${y}h2`;
line(t, '#fff');

// axis labels
out += '<g class="lbl" font-size="9" fill="#e4e4e4">';
['1.20370', '1.17570', '1.14850', '1.12130', '1.09410', '1.06690'].forEach((s, i) => text(1330, 157 + 33 * i, s, 33));
text(1328, 334, '289.9310', 36.5);
text(1328, 378, '0.00', 18);
text(1328, 412, '-237.107', 36);
['21 Apr 2017','3 May 2017','15 May 2017','25 May 2017','6 Jun 2017','16 Jun 2017','28 Jun 2017','10 Jul 2017','20 Jul 2017','1 Aug 2017','11 Aug 2017','23 Aug 2017','4 Sep 2017','14 Sep 2017','26 Sep 2017','6 Oct 2017','18 Oct 2017'].forEach((s, i) =>
  text(286.5 + 64 * i, 428, s, [49,46,51,51,45,49,49,46,47,46,50,51,46,50,51,44,49][i]));

const rows = [
  ['EURUSD,Daily&#160; 1.13106 1.13106 1.13106 1.13106', 203], ['Indicator Name:Tipu CCI', 98], ['int, int : Mode,Shift', 78],
  ['0,0 - Old Dif New : 116 MaxInt 123&#160; MinInt 0 Zero 1 NewNotax 20 OldNotMax 21', 326],
  ['0,1 - Old Dif New : 113 MaxInt 121&#160; MinInt 0 Zero 1 NewNotax 15 OldNotMax 16', 326],
  ['1,0 - Old Dif New : 144 MaxInt 95&#160; MinInt 0 Zero 1 NewNotax 21 OldNotMax 21', 321],
  ['1,1 - Old Dif New : 137 MaxInt 97&#160; MinInt 0 Zero 1 NewNotax 16 OldNotMax 16', 321],
  ['2,0 - Old Dif New : 1 MaxInt 218&#160; MinInt 0 Zero 1 NewNotax 0 OldNotMax 1', 306],
  ['2,1 - Old Dif New : 1 MaxInt 218&#160; MinInt 0 Zero 1 NewNotax 0 OldNotMax 1', 306],
  ['3,0 - Old Dif New : 218 MaxInt 0&#160; MinInt 0 Zero 1 NewNotax 0 OldNotMax 0', 306],
  ['3,1 - Old Dif New : 218 MaxInt 0&#160; MinInt 0 Zero 1 NewNotax 0 OldNotMax 0', 306],
  ['4,0 - Old Dif New : 32 MaxInt 200&#160; MinInt 0 Zero 9 NewNotax 15 OldNotMax 16', 321],
  ['4,1 - Old Dif New : 58 MaxInt 187&#160; MinInt 0 Zero 16 NewNotax 26 OldNotMax 27', 326],
  ['5,0 - Old Dif New : 41 MaxInt 0&#160; MinInt 0 Zero 21 NewNotax 0 OldNotMax 0', 306],
  ['5,1 - Old Dif New : 31 MaxInt 0&#160; MinInt 0 Zero 16 NewNotax 0 OldNotMax 0', 306]];
rows.forEach(([s, w], i) => text(291, i ? 161 + 12 * (i - 1) : 148, s, w));
text(291, 336, 'TipuCCI -115.49839', 79);
out += '</g><path d="M1327 235h37v11h-37z" fill="#fff"/>';
text(1330, 244, '1.13106', 33, 'font-size="9" fill="#000"');

// annotations
out += '<g font-family="DejaVu Sans" font-size="29.5" style="font-stretch:normal">';
text(695, 186, 'The shift zeros mean', 312, 'fill="#f00" opacity=".96"');
text(695, 222, 'current bar signals', 280, 'fill="#f00" opacity=".96"');
text(768, 284, '0 and 1 modes mean that one', 455, 'fill="#0a14e8"');
text(768, 320, 'of them is signal of BUY, other', 459, 'fill="#0a14e8"');
text(768, 356, 'means sell\'s', 184, 'fill="#0a14e8"');
out += '</g>';
line('M623 180L645 180Q666 176 687 175M665 169Q674 172 688 174Q682 182 679 195M629 205Q652 200 687 176M617 209C636 232 652 241 665 250C680 261 707 264 738 263M711 255Q722 260 739 263Q732 278 694 292', '#f00', 'stroke-width="3.800" stroke-linecap="round" stroke-linejoin="round"');

// pointer
out += '<path d="M668 285v15l3.500-3 3 5 3-1.500-3-5h4z" fill="#fff" stroke="#333"/>';
document.getElementById('chart').innerHTML = out;
```
